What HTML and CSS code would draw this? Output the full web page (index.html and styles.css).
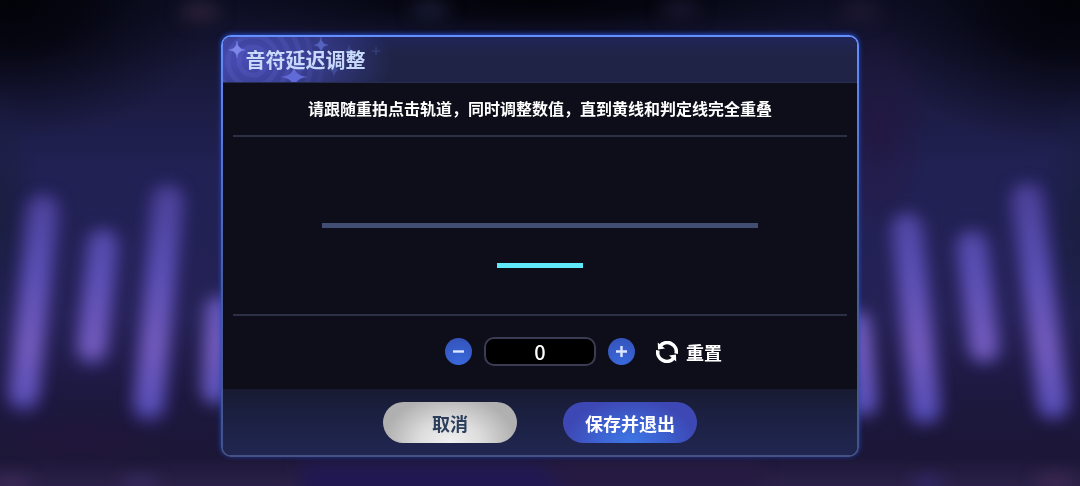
FILE: index.html
```html
<!DOCTYPE html>
<html lang="zh-CN">
<head>
<meta charset="utf-8">
<meta name="viewport" content="width=device-width, initial-scale=1">
<title>音符延迟调整</title>
<link rel="stylesheet" href="styles.css">
</head>
<body>
<svg class="stage" viewBox="0 0 1080 486" preserveAspectRatio="none" aria-hidden="true">
  <defs>
    <filter id="soft" color-interpolation-filters="sRGB" filterUnits="userSpaceOnUse" x="-60" y="-60" width="1200" height="606"><feGaussianBlur stdDeviation="8"/></filter>
    <linearGradient id="base" x1="0" y1="0" x2="0" y2="1">
      <stop offset="0" stop-color="#0d0e22"/>
      <stop offset=".15" stop-color="#19193c"/>
      <stop offset=".35" stop-color="#212154"/>
      <stop offset=".65" stop-color="#252255"/>
      <stop offset=".82" stop-color="#1c183e"/>
      <stop offset=".94" stop-color="#1c1737"/>
      <stop offset="1" stop-color="#2b2148"/>
    </linearGradient>
    <linearGradient id="tube" gradientUnits="userSpaceOnUse" x1="0" y1="190" x2="0" y2="420">
      <stop offset="0" stop-color="#4c4299"/>
      <stop offset=".35" stop-color="#5a50b6"/>
      <stop offset=".68" stop-color="#735bbd"/>
      <stop offset="1" stop-color="#544eba"/>
    </linearGradient>
    <radialGradient id="dark">
      <stop offset="0" stop-color="#020208"/>
      <stop offset=".35" stop-color="#03040c" stop-opacity=".85"/>
      <stop offset="1" stop-color="#0a0b1c" stop-opacity="0"/>
    </radialGradient>
    <radialGradient id="edge">
      <stop offset="0" stop-color="#1a1e40"/>
      <stop offset="1" stop-color="#1a1e40" stop-opacity="0"/>
    </radialGradient>
    <radialGradient id="plum">
      <stop offset="0" stop-color="#24153c" stop-opacity=".6"/>
      <stop offset="1" stop-color="#24153c" stop-opacity="0"/>
    </radialGradient>
  </defs>
  <rect width="1080" height="486" fill="url(#base)"/>
  <ellipse cx="10" cy="0" rx="210" ry="140" fill="url(#dark)"/>
  <ellipse cx="1070" cy="0" rx="210" ry="150" fill="url(#dark)"/>
  <ellipse cx="540" cy="0" rx="340" ry="44" fill="url(#dark)"/>
  <ellipse cx="0" cy="210" rx="40" ry="130" fill="url(#edge)"/>
  <ellipse cx="1080" cy="220" rx="40" ry="130" fill="url(#edge)"/>
  <ellipse cx="880" cy="130" rx="50" ry="110" fill="url(#plum)"/>
  <ellipse cx="80" cy="440" rx="90" ry="30" fill="url(#plum)"/>
  <g filter="url(#soft)" opacity=".45" stroke="#352a78" stroke-width="44" stroke-linecap="round">
    <path d="M43 215L23 395M103 250L92 350M166 205L149 405M908 235L924 405M973 250L985 345M1028 205L1052 400"/>
  </g>
  <g filter="url(#soft)" stroke="url(#tube)" stroke-width="28" stroke-linecap="round" fill="none">
    <path d="M43 210L24 393M103 244L92 347M168 200L149 403M219 310L215 390M857 325L864 402M907 228L925 408M972 246L984 347M1027 198L1053 403"/>
  </g>
  <g filter="url(#soft)">
    <ellipse cx="200" cy="12" rx="20" ry="10" fill="#292036"/>
    <ellipse cx="430" cy="10" rx="20" ry="10" fill="#171a31"/>
    <ellipse cx="680" cy="10" rx="20" ry="10" fill="#17152c"/>
    <ellipse cx="860" cy="12" rx="20" ry="10" fill="#1d1730"/>
    <path d="M300 464H540L575 500H300Z" fill="#211852"/>
    <path d="M545 462H760V490H570Z" fill="#261a42"/>
    <ellipse cx="12" cy="484" rx="20" ry="8" fill="#3c2a58"/>
    <ellipse cx="140" cy="484" rx="20" ry="8" fill="#352b60"/>
    <ellipse cx="1055" cy="482" rx="20" ry="8" fill="#3d2853"/>
    <ellipse cx="928" cy="484" rx="16" ry="8" fill="#30286a"/>
  </g>
</svg>

<main class="screen">
  <section class="dialog" role="dialog" aria-labelledby="dialog-title">
    <header class="dialog-header">
      <svg class="header-art" width="170" height="46" viewBox="0 0 170 46" aria-hidden="true">
        <g fill="none" stroke="#7175df" stroke-opacity=".17" stroke-width="5">
          <circle cx="30" cy="24" r="14"/><circle cx="30" cy="24" r="25"/>
          <circle cx="30" cy="24" r="36"/><circle cx="30" cy="24" r="47"/>
          <circle cx="30" cy="24" r="58" stroke-opacity=".12"/><circle cx="30" cy="24" r="69" stroke-opacity=".07"/>
        </g>
        <path d="M14 4Q14.5 12 22 13Q14.5 13.5 14 21Q13.500 13.5 6 13Q13.500 12 14 4Z" fill="#7f86ea" stroke="#7f86ea" stroke-width=".4"/>
        <path d="M98 0Q98.500 7.500 105 8Q98.500 8.500 98 16Q97.500 8.500 91 8Q97.500 7.500 98 0Z" fill="#5563bf" stroke="#5563bf" stroke-width=".4"/>
        <path d="M71 29Q72 39 85 40Q72 41 71 51Q70 41 57 40Q70 39 71 29Z" fill="#616bd7"/>
        <path d="M126 6Q126.500 13.500 131 14Q126.500 14.500 126 22Q125.500 14.500 121 14Q125.500 13.500 126 6Z" fill="#38448a"/>
        <path d="M111 25Q111.500 32.500 116 33Q111.500 33.500 111 41Q110.500 33.500 106 33Q110.500 32.500 111 25Z" fill="#3f4c98"/>
        <path d="M153 10V18M149 14H157" stroke="#3b4584" fill="none"/>
      </svg>
      <h1 class="dialog-title" id="dialog-title">音符延迟调整</h1>
    </header>

    <div class="dialog-body">
      <p class="hint">请跟随重拍点击轨道，同时调整数值，直到黄线和判定线完全重叠</p>
      <div class="track">
        <div class="judge-line"></div>
        <div class="beat-line"></div>
      </div>
      <div class="controls">
        <div class="stepper">
          <button class="step" type="button" aria-label="减少">
            <svg width="13" height="13" viewBox="0 0 13 13" aria-hidden="true"><path d="M1 6.5H12"/></svg>
          </button>
          <input class="value" type="text" inputmode="numeric" value="0" aria-label="延迟数值">
          <button class="step" type="button" aria-label="增加">
            <svg width="13" height="13" viewBox="0 0 13 13" aria-hidden="true"><path d="M1 6.5H12M6.5 1V12"/></svg>
          </button>
        </div>
        <button class="reset" type="button">
          <svg width="22" height="22" viewBox="0 0 22 22" aria-hidden="true">
            <g fill="none" stroke="#fff" stroke-width="3.6">
              <path d="M4.2 4.9A9.100 9.100 0 0 1 20.100 12.600"/>
              <path d="M17.8 17.1A9.100 9.100 0 0 1 1.900 9.400"/>
            </g>
            <path d="M1.8 1.6L2 8.4L9 7.6Z" fill="#fff"/>
            <path d="M20.2 20.4L20 13.6L13 14.4Z" fill="#fff"/>
          </svg>
          <span>重置</span>
        </button>
      </div>
    </div>

    <footer class="dialog-footer">
      <button class="pill cancel" type="button">取消</button>
      <button class="pill save" type="button">保存并退出</button>
    </footer>
  </section>
</main>
</body>
</html>
```
FILE: styles.css
```css
* {
  box-sizing: border-box;
}

body {
  margin: 0;
  background: #151637;
  color: #fff;
  font-family: "Noto Sans CJK SC", sans-serif;
}

button,
input {
  margin: 0;
  padding: 0;
  border: 0;
  font: inherit;
  color: inherit;
}

.stage {
  position: fixed;
  inset: 0;
  z-index: -1;
  width: 100%;
  height: 100%;
}

.screen {
  display: flex;
  justify-content: center;
  align-items: center;
  min-height: 100vh;
  padding: 16px 0 10px;
}

.dialog {
  width: 59%;
  min-width: 480px;
  border: 2px solid transparent;
  border-radius: 10px;
  background:
    linear-gradient(#0e0e1a, #0e0e1a) padding-box,
    linear-gradient(#6590ff, #5275d0 30%, #465c9c 60%, #445384) border-box;
  box-shadow: 0 -1px 5px #2448c0;
}

.dialog-header {
  position: relative;
  display: flex;
  align-items: center;
  height: 46px;
  padding-left: 22px;
  overflow: hidden;
  border-bottom: 1px solid #272d50;
  border-radius: 8px 8px 0 0;
  background:
    radial-gradient(ellipse 150px 70px at 20px 22px, #484cb4, #3a4096 40%, transparent),
    linear-gradient(#202558, #1f2345 40%, #1f2446);
}

.header-art {
  position: absolute;
  top: 0;
  left: 0;
}

.dialog-title {
  position: relative;
  margin: 0;
  color: #c8dafb;
  font-size: 20px;
  font-weight: 700;
  line-height: 28px;
}

.dialog-body {
  padding: 0 10px;
}

.hint {
  margin: 0;
  padding: 13px 0 15px;
  font-size: 16px;
  font-weight: 700;
  line-height: 24px;
  text-align: center;
}

.track {
  display: flex;
  flex-direction: column;
  align-items: center;
  gap: 35px;
  padding: 86px 0 46px;
  border-top: 2px solid #2b3047;
  border-bottom: 2px solid #2b3047;
}

.judge-line {
  width: 71%;
  height: 5px;
  background: #414d73;
}

.beat-line {
  width: 14%;
  height: 5px;
  background: #5fe9fb;
}

.controls {
  display: grid;
  grid-template-columns: 1fr auto 1fr;
  align-items: center;
  padding: 21px 0 23px;
}

.stepper {
  grid-column: 2;
  display: flex;
  align-items: center;
  gap: 12px;
}

.step {
  display: grid;
  place-items: center;
  width: 27px;
  height: 27px;
  border-radius: 50%;
  background: radial-gradient(circle at 50% 100%, #3a6ade, #3451b8);
}

.step path {
  fill: none;
  stroke: #dce6ff;
  stroke-width: 2.4;
}

.value {
  width: 112px;
  height: 29px;
  border: 2px solid #3b3c54;
  border-radius: 10px;
  background: #000;
  font-size: 20px;
  font-weight: 500;
  line-height: 24px;
  text-align: center;
}

.reset {
  display: flex;
  align-items: center;
  justify-self: start;
  gap: 8px;
  margin-left: 21px;
  background: none;
  font-size: 18px;
  font-weight: 700;
  line-height: 26px;
}

.dialog-footer {
  display: flex;
  justify-content: center;
  gap: 46px;
  padding: 13px 0 12px;
  border-radius: 0 0 8px 8px;
  background: linear-gradient(#171a31, #1b2040 35%, #202650);
}

.pill {
  width: 134px;
  height: 41px;
  border-radius: 21px;
  font-size: 18px;
  font-weight: 700;
  line-height: 28px;
}

.cancel {
  background: radial-gradient(ellipse 66px 48px at 50% 100%, #f0f0f0, #dedede 45%, #b0b0b0);
  color: #2b3e5b;
}

.save {
  background: radial-gradient(ellipse 66px 44px at 50% 100%, #3e76e4, #3d62d2 50%, #3d48b4);
}
```
